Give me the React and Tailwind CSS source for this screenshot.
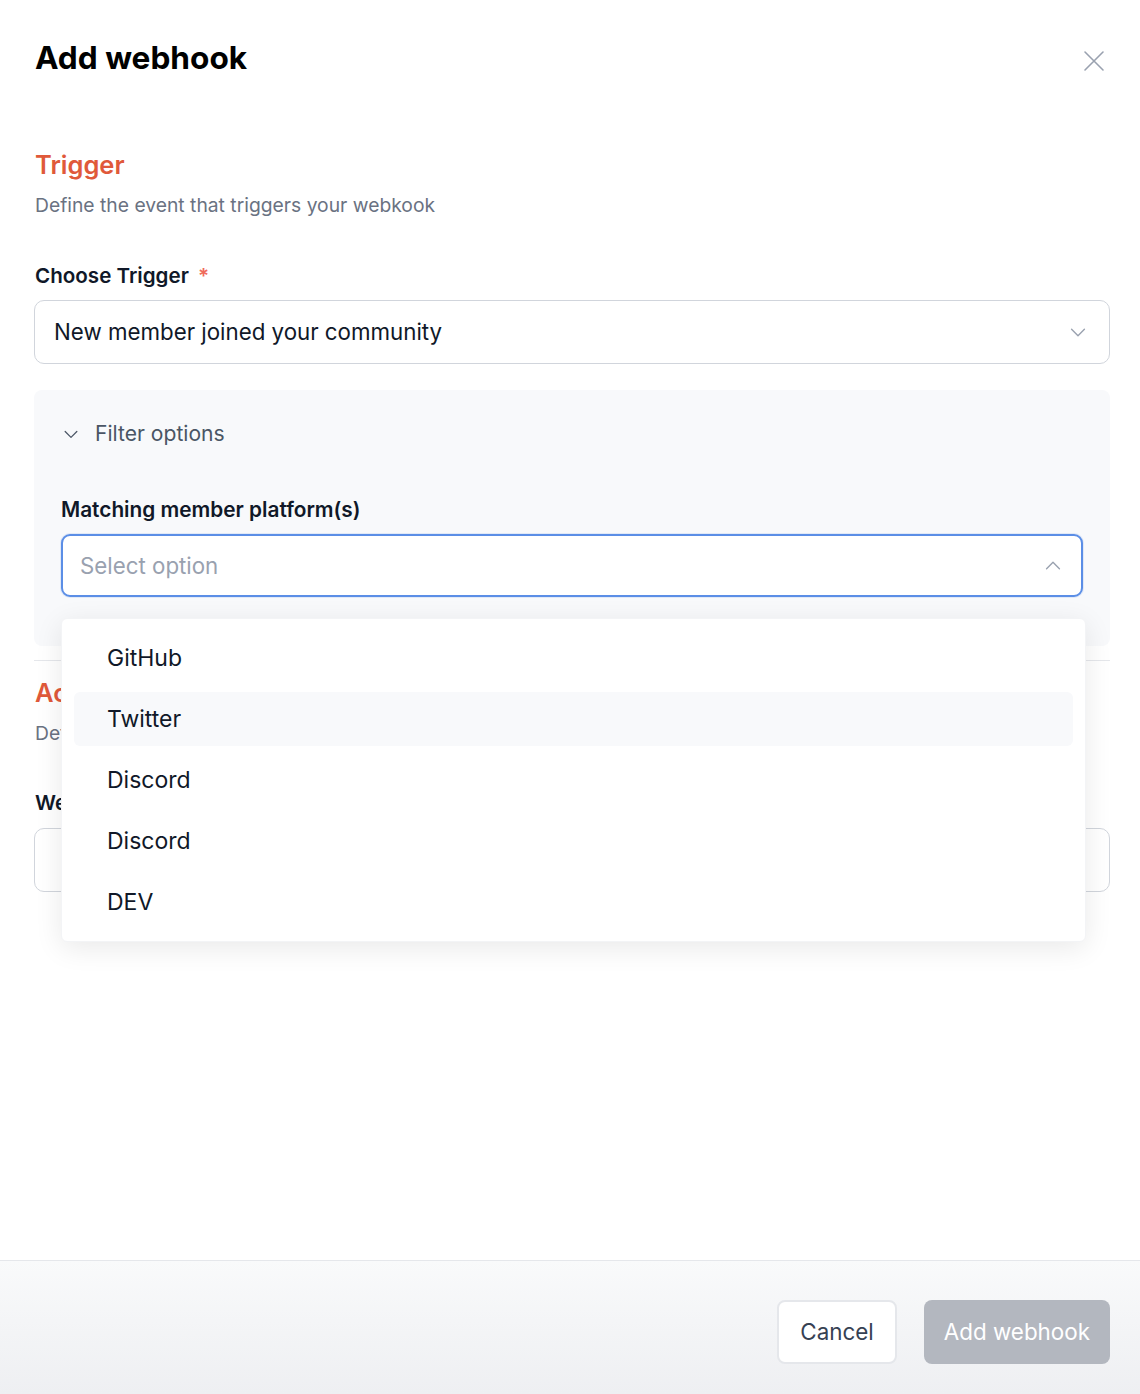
import React from 'react';

const font = { fontFamily: 'Inter, "Noto Sans", sans-serif' };

const ChevronDown = ({ className }) => (
  <svg viewBox="0 0 24 24" fill="none" stroke="currentColor" strokeWidth="1.5" strokeLinecap="round" strokeLinejoin="round" className={className}>
    <path d="M5 9l7 7 7-7" />
  </svg>
);

const ChevronUp = ({ className }) => (
  <svg viewBox="0 0 24 24" fill="none" stroke="currentColor" strokeWidth="1.5" strokeLinecap="round" strokeLinejoin="round" className={className}>
    <path d="M5 15l7-7 7 7" />
  </svg>
);

const platforms = ['GitHub', 'Twitter', 'Discord', 'Discord', 'DEV'];

export default function App() {
  return (
    <div className="w-[1140px] h-[1394px] bg-white flex flex-col text-gray-900" style={font}>
      {/* Body */}
      <div className="flex-1 pl-[34px] pr-[30px] pt-[38px] relative">
        <div className="flex items-start justify-between">
          <h1 className="text-[31.6px] font-bold text-black leading-[40px] pl-px">Add webhook</h1>
          <button className="mt-[11px] mr-[4px] text-gray-400">
            <svg viewBox="0 0 24 24" className="w-[24px] h-[24px]" fill="none" stroke="currentColor" strokeWidth="1.6" strokeLinecap="round">
              <path d="M3 3l18 18M21 3L3 21" />
            </svg>
          </button>
        </div>

        {/* Trigger section */}
        <h2 className="mt-[70px] text-[25.5px] font-semibold text-[#e0593a] leading-[34px] pl-px">Trigger</h2>
        <p className="mt-[9px] text-[19.3px] text-gray-500 leading-[28px] pl-px">Define the event that triggers your webkook</p>

        <label className="block mt-[43px] text-[20.6px] font-semibold text-gray-900 leading-[28px] pl-px">
          Choose Trigger <span className="text-[#ef6b5b] ml-1">*</span>
        </label>
        <div className="mt-[10px] h-[64px] border border-gray-300 rounded-[10px] flex items-center justify-between pl-[19px] pr-[20px]">
          <span className="text-[22.3px] text-gray-900">New member joined your community</span>
          <ChevronDown className="w-[22px] h-[22px] text-gray-400" />
        </div>

        {/* Filter options */}
        <div className="mt-[26px] bg-[#f8f9fb] rounded-[8px] px-[27px] pt-[29px] pb-[49px]">
          <div className="h-[30px] flex items-center gap-[14px] text-gray-600">
            <ChevronDown className="w-[20px] h-[20px] text-gray-600" />
            <span className="text-[21.1px]">Filter options</span>
          </div>
          <label className="block mt-[47px] text-[20.8px] font-semibold text-gray-900 leading-[28px]">Matching member platform(s)</label>
          <div className="mt-[10px] h-[63px] border-2 border-[#5b8ee6] bg-white rounded-[9px] flex items-center justify-between pl-[17px] pr-[17px] shadow-[0_0_0_1px_rgba(91,142,230,0.15)]">
            <span className="text-[22.3px] text-gray-400">Select option</span>
            <ChevronUp className="w-[22px] h-[22px] text-gray-400" />
          </div>
        </div>

        <div className="mt-[14px] border-t border-gray-200" />

        {/* Action section */}
        <h2 className="mt-[15px] text-[25.5px] font-semibold text-[#e0593a] leading-[34px] pl-px">Action</h2>
        <p className="mt-[9px] text-[19.3px] text-gray-500 leading-[28px] pl-px">Define the endpoint where the webhook payload will be sent</p>
        <label className="block mt-[42px] text-[20.6px] font-semibold text-gray-900 leading-[28px] pl-px">
          Webhook URL <span className="text-[#ef6b5b] ml-1">*</span>
        </label>
        <div className="mt-[11px] h-[64px] border border-gray-300 rounded-[10px]" />

        {/* Dropdown menu */}
        <div className="absolute left-[61px] top-[618px] w-[1025px] bg-white rounded-[6px] border border-gray-100 shadow-[0_6px_28px_rgba(0,0,0,0.09)] p-[12px] flex flex-col gap-[7px]">
          {platforms.map((p, i) => (
            <div
              key={i}
              className={`h-[54px] flex items-center pl-[33px] rounded-[6px] text-[23px] text-gray-900 ${i === 1 ? 'bg-[#f8f9fb]' : ''}`}
            >
              {p}
            </div>
          ))}
        </div>
      </div>

      {/* Footer */}
      <div className="h-[134px] border-t border-gray-200 bg-gradient-to-b from-[#f9fafb] to-[#eeeff2] flex justify-end items-start gap-[27px] px-[30px] pt-[39px]">
        <button className="h-[64px] px-[21px] bg-white border-2 border-gray-200 rounded-[8px] text-[22.4px] text-gray-700">Cancel</button>
        <button className="h-[64px] px-[20px] bg-[#b3b7bf] rounded-[8px] text-[22.4px] text-white">Add webhook</button>
      </div>
    </div>
  );
}
